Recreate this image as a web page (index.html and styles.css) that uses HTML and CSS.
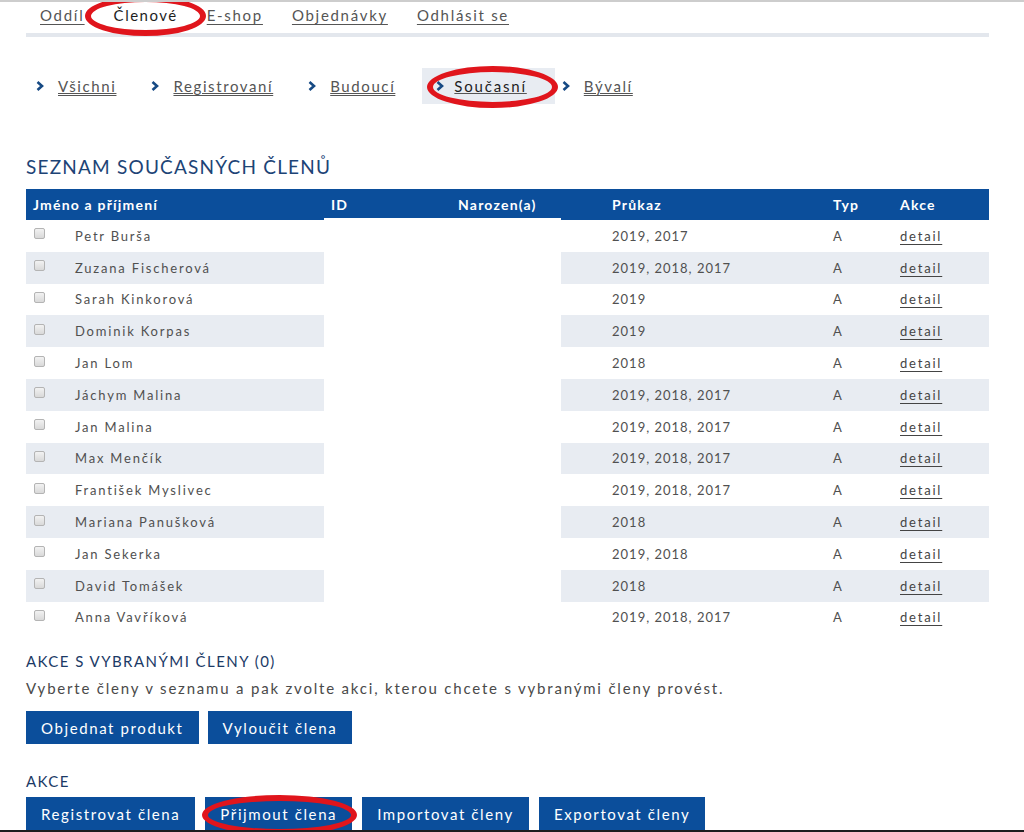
FILE: index.html
```html
<!DOCTYPE html>
<html lang="cs">
<head>
<meta charset="utf-8">
<title>Seznam současných členů</title>
<link rel="stylesheet" href="styles.css">
</head>
<body>
<div class="page">
  <nav class="topnav">
    <a href="#" class="tlink">Oddíl</a>
    <a href="#" class="tlink active">Členové</a>
    <a href="#" class="tlink">E-shop</a>
    <a href="#" class="tlink">Objednávky</a>
    <a href="#" class="tlink">Odhlásit se</a>
    <span class="mark mark-top"></span>
  </nav>
  <div class="bar"></div>

  <nav class="subnav">
    <a href="#" class="sitem"><svg class="chev" viewBox="0 0 8 10" width="8" height="10"><polyline points="1.5,1 6,5 1.5,9" fill="none" stroke="#174a84" stroke-width="2.6"/></svg><span>Všichni</span></a>
    <a href="#" class="sitem"><svg class="chev" viewBox="0 0 8 10" width="8" height="10"><polyline points="1.5,1 6,5 1.5,9" fill="none" stroke="#174a84" stroke-width="2.6"/></svg><span>Registrovaní</span></a>
    <a href="#" class="sitem"><svg class="chev" viewBox="0 0 8 10" width="8" height="10"><polyline points="1.5,1 6,5 1.5,9" fill="none" stroke="#174a84" stroke-width="2.6"/></svg><span>Budoucí</span></a>
    <a href="#" class="sitem active"><svg class="chev" viewBox="0 0 8 10" width="8" height="10"><polyline points="1.5,1 6,5 1.5,9" fill="none" stroke="#174a84" stroke-width="2.6"/></svg><span>Současní</span><i class="mark mark-sub"></i></a>
    <a href="#" class="sitem"><svg class="chev" viewBox="0 0 8 10" width="8" height="10"><polyline points="1.5,1 6,5 1.5,9" fill="none" stroke="#174a84" stroke-width="2.6"/></svg><span>Bývalí</span></a>
  </nav>

  <h1 class="title">Seznam současných členů</h1>

  <div class="tablewrap">
    <table class="members">
      <colgroup>
        <col class="c-cb"><col class="c-name"><col class="c-id"><col class="c-born"><col class="c-card"><col class="c-type"><col class="c-act">
      </colgroup>
      <thead>
        <tr><th colspan="2">Jméno a příjmení</th><th>ID</th><th>Narozen(a)</th><th>Průkaz</th><th>Typ</th><th>Akce</th></tr>
      </thead>
      <tbody>
        <tr><td><span class="cb"></span></td><td>Petr Burša</td><td></td><td></td><td class="num">2019, 2017</td><td>A</td><td><a href="#">detail</a></td></tr>
        <tr><td><span class="cb"></span></td><td>Zuzana Fischerová</td><td></td><td></td><td class="num">2019, 2018, 2017</td><td>A</td><td><a href="#">detail</a></td></tr>
        <tr><td><span class="cb"></span></td><td>Sarah Kinkorová</td><td></td><td></td><td class="num">2019</td><td>A</td><td><a href="#">detail</a></td></tr>
        <tr><td><span class="cb"></span></td><td>Dominik Korpas</td><td></td><td></td><td class="num">2019</td><td>A</td><td><a href="#">detail</a></td></tr>
        <tr><td><span class="cb"></span></td><td>Jan Lom</td><td></td><td></td><td class="num">2018</td><td>A</td><td><a href="#">detail</a></td></tr>
        <tr><td><span class="cb"></span></td><td>Jáchym Malina</td><td></td><td></td><td class="num">2019, 2018, 2017</td><td>A</td><td><a href="#">detail</a></td></tr>
        <tr><td><span class="cb"></span></td><td>Jan Malina</td><td></td><td></td><td class="num">2019, 2018, 2017</td><td>A</td><td><a href="#">detail</a></td></tr>
        <tr><td><span class="cb"></span></td><td>Max Menčík</td><td></td><td></td><td class="num">2019, 2018, 2017</td><td>A</td><td><a href="#">detail</a></td></tr>
        <tr><td><span class="cb"></span></td><td>František Myslivec</td><td></td><td></td><td class="num">2019, 2018, 2017</td><td>A</td><td><a href="#">detail</a></td></tr>
        <tr><td><span class="cb"></span></td><td>Mariana Panušková</td><td></td><td></td><td class="num">2018</td><td>A</td><td><a href="#">detail</a></td></tr>
        <tr><td><span class="cb"></span></td><td>Jan Sekerka</td><td></td><td></td><td class="num">2019, 2018</td><td>A</td><td><a href="#">detail</a></td></tr>
        <tr><td><span class="cb"></span></td><td>David Tomášek</td><td></td><td></td><td class="num">2018</td><td>A</td><td><a href="#">detail</a></td></tr>
        <tr><td><span class="cb"></span></td><td>Anna Vavříková</td><td></td><td></td><td class="num">2019, 2018, 2017</td><td>A</td><td><a href="#">detail</a></td></tr>
      </tbody>
    </table>
    <div class="redact"></div>
  </div>

  <h2 class="subtitle">Akce s vybranými členy (0)</h2>
  <p class="hint">Vyberte členy v seznamu a pak zvolte akci, kterou chcete s vybranými členy provést.</p>
  <div class="buttons">
    <button class="btn">Objednat produkt</button>
    <button class="btn">Vyloučit člena</button>
  </div>

  <h2 class="subtitle akce">Akce</h2>
  <div class="buttons wide">
    <button class="btn">Registrovat člena</button>
    <button class="btn">Přijmout člena<i class="mark mark-btn"></i></button>
    <button class="btn">Importovat členy</button>
    <button class="btn">Exportovat členy</button>
  </div>
</div>
<div class="bottomstrip"></div>
</body>
</html>
```

FILE: styles.css
```css
html, body {
  margin: 0;
  padding: 0;
  background: #ffffff;
}

body {
  font-family: Lato, "Open Sans", "DejaVu Sans", sans-serif;
  color: #454545;
  border-top: 2px solid #cdcdcd;
}

.page {
  width: 963px;
  padding-left: 26px;
}

/* top navigation */
.topnav {
  position: relative;
  display: flex;
  align-items: center;
  gap: 29px;
  height: 26px;
  padding-left: 14px;
  margin-bottom: 5px;
}

.tlink {
  font-size: 15px;
  letter-spacing: 1.7px;
  color: #555555;
  text-decoration: underline;
  text-underline-offset: 3px;
}

.tlink.active {
  color: #1e1e1e;
  text-decoration: none;
  letter-spacing: 1.5px;
}

.bar {
  height: 4px;
  background: #e3e7ed;
}

/* sub navigation */
.subnav {
  display: flex;
  align-items: center;
  margin-top: 31px;
  height: 36px;
}

.sitem {
  position: relative;
  display: flex;
  align-items: center;
  gap: 14px;
  height: 36px;
  padding: 0 25px 0 10px;
  font-size: 15px;
  letter-spacing: 1.6px;
  color: #555555;
}

.sitem span {
  text-decoration: underline;
  text-underline-offset: 3px;
}

.sitem.active {
  background: #e8ecf2;
  gap: 10px;
  padding: 0 28px 0 14px;
  margin-left: 2px;
  margin-right: -3px;
}

.sitem.active span {
  text-decoration: none;
  color: #1e1e1e;
  letter-spacing: 1.8px;
}

.chev {
  display: block;
  flex: none;
}

/* heading */
.title {
  margin: 51px 0 10px;
  font-size: 19px;
  line-height: 24px;
  font-weight: 400;
  letter-spacing: 1.2px;
  text-transform: uppercase;
  color: #1d4476;
}

/* table */
.tablewrap {
  position: relative;
}

.members {
  width: 963px;
  table-layout: fixed;
  border-collapse: collapse;
}

.c-cb { width: 42px; }
.c-name { width: 256px; }
.c-id { width: 127px; }
.c-born { width: 154px; }
.c-card { width: 221px; }
.c-type { width: 67px; }
.c-act { width: 96px; }

.members th {
  height: 31px;
  padding: 0 0 0 7px;
  background: #0b4e9b;
  color: #ffffff;
  font-size: 14px;
  font-weight: 700;
  letter-spacing: 1.2px;
  text-align: left;
}

.members td {
  height: 31.8px;
  padding: 0 0 0 7px;
  font-size: 13px;
  letter-spacing: 1.8px;
  color: #505050;
  white-space: nowrap;
}

.members td.num {
  letter-spacing: 1px;
}

.members tbody tr:nth-child(even) td {
  background: #e8ecf2;
}

.members td:first-child {
  padding-left: 8px;
}

.members a {
  color: #444444;
  text-decoration: underline;
  text-underline-offset: 3px;
}

.cb {
  display: block;
  width: 9px;
  height: 9px;
  border: 1px solid #b4b4b4;
  border-radius: 2px;
  background: linear-gradient(#f2f2f2, #d9d9d9);
  margin-top: -4px;
}

.redact {
  position: absolute;
  left: 298px;
  top: 29px;
  width: 237px;
  bottom: 0;
  background: #ffffff;
}

/* actions */
.subtitle {
  margin: 19px 0 0;
  font-size: 15px;
  line-height: 18px;
  font-weight: 400;
  letter-spacing: 1.45px;
  text-transform: uppercase;
  color: #1b3a66;
}

.subtitle.akce {
  margin-top: 28px;
}

.hint {
  margin: 8px 0 0;
  font-size: 15px;
  line-height: 20px;
  letter-spacing: 1.8px;
  color: #4a4a4a;
}

.buttons {
  display: flex;
  gap: 9px;
  margin-top: 13px;
}

.buttons.wide {
  gap: 10px;
  margin-top: 7px;
}

.btn {
  position: relative;
  height: 33px;
  padding: 0 15px;
  border: 0;
  background: #0b4e9b;
  color: #ffffff;
  font-family: Lato, "Open Sans", sans-serif;
  font-size: 15px;
  letter-spacing: 1.6px;
}

/* red annotation ellipses */
.mark {
  position: absolute;
  border: 6px solid #e0151c;
  border-radius: 50%;
  box-sizing: border-box;
  pointer-events: none;
}

.mark-top {
  left: 59px;
  top: -6px;
  width: 121px;
  height: 40px;
}

.mark-sub {
  left: 5px;
  top: -2px;
  width: 131px;
  height: 42px;
}

.mark-btn {
  left: -3px;
  top: -2px;
  width: 155px;
  height: 40px;
}

.bottomstrip {
  position: fixed;
  left: 0;
  right: 0;
  bottom: 0;
  height: 2px;
  background: #1e1e1e;
}
```
